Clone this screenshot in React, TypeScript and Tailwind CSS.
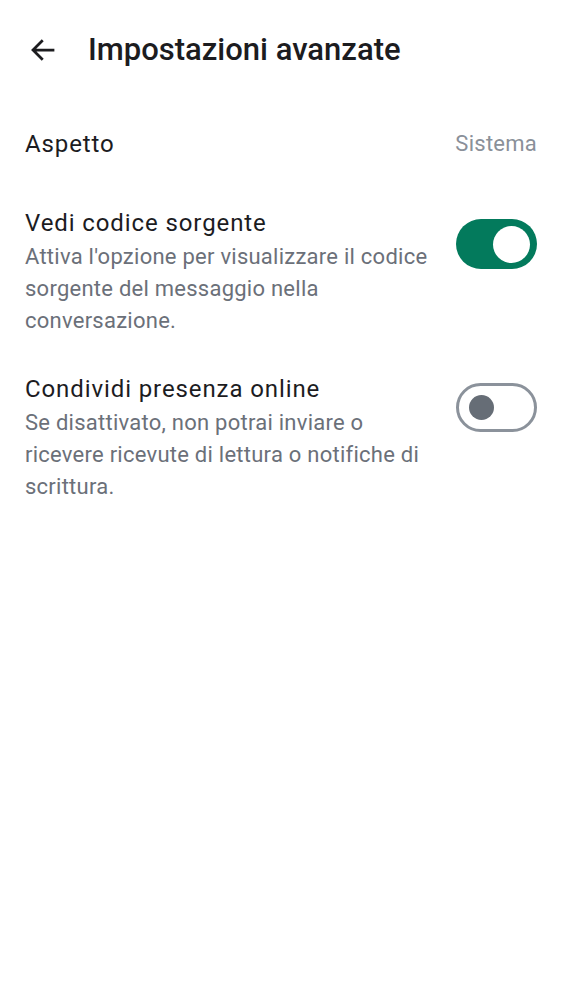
import React from 'react';

const Toggle: React.FC<{ on: boolean }> = ({ on }) =>
  on ? (
    <div className="flex h-[50px] w-[81px] shrink-0 items-center justify-end rounded-full bg-[#037a5c] pr-[7px]">
      <div className="h-[37px] w-[37px] rounded-full bg-white" />
    </div>
  ) : (
    <div className="flex h-[49px] w-[81px] shrink-0 items-center rounded-full border-[3px] border-[#8b929b] bg-white pl-[10px]">
      <div className="h-[25px] w-[25px] rounded-full bg-[#666d76]" />
    </div>
  );

const ToggleRow: React.FC<{ title: string; desc: string; on: boolean }> = ({ title, desc, on }) => (
  <div className="flex items-start justify-between gap-2 px-[25px] py-[18px]">
    <div className="flex-1">
      <div className="mb-[2px] text-[24px] leading-[32px] tracking-[0.9px] text-[#1c1c1f]">{title}</div>
      <div className="text-[22px] leading-[32px] tracking-[0.25px] text-[#6b7079]">{desc}</div>
    </div>
    <div className={on ? 'pt-[12px]' : 'pt-[10px]'}>
      <Toggle on={on} />
    </div>
  </div>
);

export default function App() {
  return (
    <div className="min-h-[1000px] w-[562px] bg-white" style={{ fontFamily: 'Roboto, "Noto Sans", sans-serif' }}>
      {/* Header */}
      <div className="flex h-[100px] items-center pl-[28px]">
        <svg width="30" height="30" viewBox="0 0 24 24" className="text-[#1c1c1f]" fill="none" stroke="currentColor" strokeWidth="2.2" strokeLinecap="square">
          <path d="M20 12H5M11 5l-7 7 7 7" />
        </svg>
        <h1 className="ml-[30px] text-[31px] font-medium text-[#1c1c1f]">Impostazioni avanzate</h1>
      </div>

      {/* Aspetto */}
      <div className="flex items-center justify-between px-[25px] pb-[29px] pt-[27px]">
        <span className="text-[24px] leading-[32px] tracking-[0.9px] text-[#1c1c1f]">Aspetto</span>
        <span className="text-[22px] tracking-[0.25px] text-[#8a9099]">Sistema</span>
      </div>

      <ToggleRow
        title="Vedi codice sorgente"
        desc="Attiva l'opzione per visualizzare il codice sorgente del messaggio nella conversazione."
        on
      />
      <ToggleRow
        title="Condividi presenza online"
        desc="Se disattivato, non potrai inviare o ricevere ricevute di lettura o notifiche di scrittura."
        on={false}
      />
    </div>
  );
}
